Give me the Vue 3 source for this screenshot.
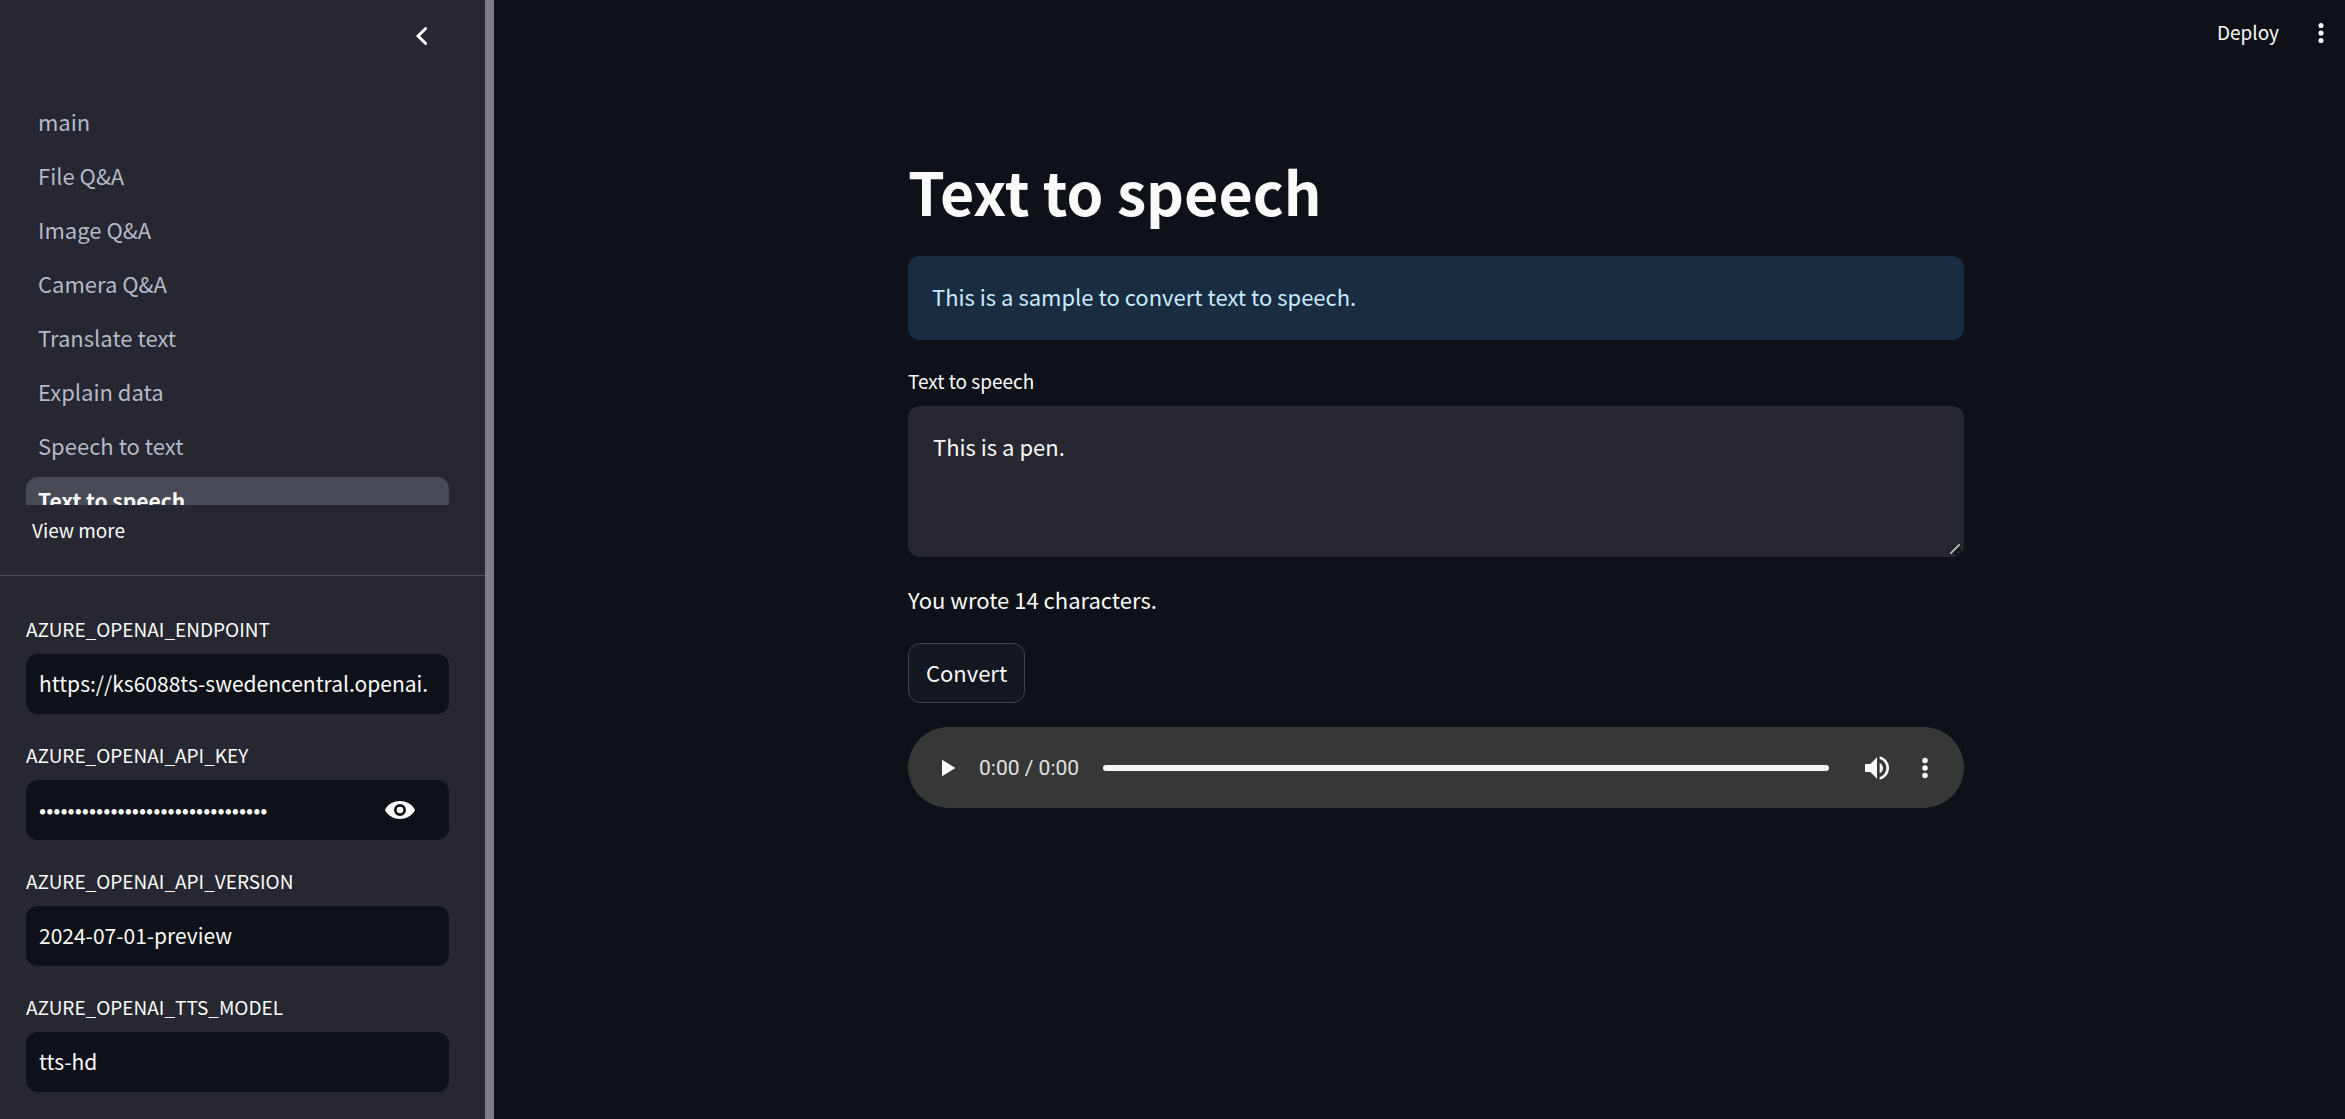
<script setup>
import { ref, computed } from 'vue'

const pages = ['main', 'File Q&A', 'Image Q&A', 'Camera Q&A', 'Translate text', 'Explain data', 'Speech to text', 'Text to speech']
const current = 'Text to speech'

const fields = ref([
  { id: 'endpoint', label: 'AZURE_OPENAI_ENDPOINT', value: 'https://ks6088ts-swedencentral.openai.', secret: false },
  { id: 'key', label: 'AZURE_OPENAI_API_KEY', value: '0123456789abcdef0123456789abcdef', secret: true },
  { id: 'version', label: 'AZURE_OPENAI_API_VERSION', value: '2024-07-01-preview', secret: false },
  { id: 'model', label: 'AZURE_OPENAI_TTS_MODEL', value: 'tts-hd', secret: false },
])

const text = ref('This is a pen.')
const count = computed(() => text.value.length)
const position = ref(0)
</script>

<template>
  <div class="app">
    <aside class="sidebar">
      <div class="sidebar-head">
        <button class="icon-btn" aria-label="Collapse sidebar">
          <svg width="36" height="36" viewBox="0 0 24 24" fill="none" stroke="currentColor" stroke-width="2" stroke-linecap="round">
            <path d="M14.4 7l-5 5 5 5" />
          </svg>
        </button>
      </div>
      <nav class="nav">
        <ul class="nav-list">
          <li v-for="page in pages" :key="page">
            <a href="#" class="nav-link" :class="{ active: page === current }">{{ page }}</a>
          </li>
        </ul>
        <button class="more">View more</button>
      </nav>
      <form class="fields" @submit.prevent>
        <div v-for="f in fields" :key="f.id" class="field">
          <label class="label" :for="f.id">{{ f.label }}</label>
          <div class="box">
            <input :id="f.id" v-model="f.value" class="input" :type="f.secret ? 'password' : 'text'" autocomplete="off" />
            <button v-if="f.secret" type="button" class="icon-btn eye" aria-label="Show password">
              <svg width="36" height="36" viewBox="0 0 24 24" fill="currentColor" fill-rule="evenodd">
                <path d="M12 6C8 6 4.200 8 2.300 11.300c-.3.400-.3 1 0 1.400C4.200 16 8 18 12 18s7.800-2 9.700-5.300c.3-.4.3-1 0-1.400C19.800 8 16 6 12 6zm0 10a4 4 0 1 1 0-8 4 4 0 0 1 0 8z" />
                <circle cx="12" cy="12" r="2.200" />
              </svg>
            </button>
          </div>
        </div>
      </form>
    </aside>
    <div class="resizer"></div>

    <div class="page">
      <header class="toolbar">
        <button class="deploy">Deploy</button>
        <button class="icon-btn" aria-label="Main menu">
          <svg width="36" height="36" viewBox="0 0 24 24" fill="currentColor">
            <circle cx="12" cy="7" r="1.700" /><circle cx="12" cy="12" r="1.700" /><circle cx="12" cy="17" r="1.700" />
          </svg>
        </button>
      </header>
      <main class="content">
        <h1 class="title">Text to speech</h1>
        <p class="info">This is a sample to convert text to speech.</p>
        <div class="compose">
          <label class="label" for="speech">Text to speech</label>
          <div class="area-wrap">
            <textarea id="speech" v-model="text" class="area"></textarea>
            <svg class="grip" width="12" height="12" viewBox="0 0 12 12" fill="none" stroke-linecap="square">
              <path d="M2 10l8-8M8 10l2-2" stroke="#101114" stroke-width="4" />
              <path d="M2 10l8-8" stroke="#b9b9bb" stroke-width="2" />
              <path d="M9 9.500l.5-.5" stroke="#8d8d90" stroke-width="1" />
            </svg>
          </div>
        </div>
        <p class="count">You wrote {{ count }} characters.</p>
        <button class="convert">Convert</button>
        <div class="player">
          <button class="icon-btn" aria-label="Play">
            <svg width="36" height="36" viewBox="0 0 24 24" fill="currentColor"><path d="M8 6.500v11l9-5.500z" /></svg>
          </button>
          <span class="time">0:00 / 0:00</span>
          <input v-model="position" class="seek" type="range" min="0" max="100" aria-label="Seek" />
          <button class="icon-btn" aria-label="Mute">
            <svg width="32" height="32" viewBox="0 0 24 24" fill="currentColor">
              <path d="M3 9v6h4l5 5V4L7 9H3zm13.500 3c0-1.770-1.020-3.290-2.500-4.030v8.050c1.480-.73 2.500-2.250 2.500-4.020zM14 3.230v2.060c2.890.86 5 3.540 5 6.710s-2.110 5.850-5 6.710v2.060c4.010-.91 7-4.490 7-8.770s-2.990-7.860-7-8.770z" />
            </svg>
          </button>
          <button class="icon-btn" aria-label="More options">
            <svg width="36" height="36" viewBox="0 0 24 24" fill="currentColor">
              <circle cx="12" cy="7" r="1.850" /><circle cx="12" cy="12" r="1.850" /><circle cx="12" cy="17" r="1.850" />
            </svg>
          </button>
        </div>
      </main>
    </div>
  </div>
</template>

<style>
body {
  margin: 0;
  background: #0e1117;
}
</style>

<style scoped>
.app {
  display: flex;
  height: 100vh;
  overflow: hidden;
  background: #0e1117;
  color: #fafafa;
  font-family: "Noto Sans CJK JP", "Noto Sans", sans-serif;
  font-size: 22px;
  line-height: 36px;
}
.app * {
  box-sizing: border-box;
}
button, input, textarea {
  font: inherit;
  color: inherit;
  border: 0;
  background: none;
  padding: 0;
  margin: 0;
  outline: 0;
}
h1, p, ul {
  margin: 0;
  padding: 0;
}
button {
  cursor: pointer;
}
.icon-btn {
  display: flex;
  flex: none;
}

.sidebar {
  flex: none;
  width: 485px;
  height: 100%;
  overflow: hidden;
  background: #262730;
}
.resizer {
  flex: none;
  width: 9px;
  background: #7d7c83;
}
.sidebar-head {
  display: flex;
  justify-content: flex-end;
  padding: 18px 45px 42px 0;
}
.nav {
  border-bottom: 1px solid #4c4d56;
  padding-bottom: 28px;
}
.nav-list {
  list-style: none;
  height: 409px;
  overflow: hidden;
  padding: 0 36px 0 26px;
}
.nav-link {
  display: block;
  height: 48px;
  margin: 3px 0 6px;
  padding: 0 12px;
  border-radius: 12px;
  line-height: 45px;
  color: #b4b9c8;
  text-decoration: none;
}
.nav-link.active {
  background: #484a55;
  color: #fafafa;
  font-size: 21px;
  font-weight: 700;
  line-height: 46px;
}
.more {
  display: block;
  margin-left: 32px;
  margin-top: 8px;
  font-size: 19px;
  line-height: 34px;
}
.fields {
  display: flex;
  flex-direction: column;
  gap: 24px;
  padding: 36px 36px 0 26px;
}
.field {
  display: flex;
  flex-direction: column;
}
.label {
  font-size: 19px;
  line-height: 34px;
  margin-bottom: 8px;
}
.box {
  display: flex;
  align-items: center;
  height: 60px;
  border-radius: 12px;
  background: #0e1117;
  padding: 0 12px 0 13px;
}
.input {
  flex: 1;
  min-width: 0;
  height: 100%;
  padding-bottom: 3px;
  font-size: 21px;
}
.eye {
  margin-right: 19px;
}

.page {
  flex: 1;
  min-width: 0;
}
.toolbar {
  display: flex;
  align-items: center;
  justify-content: flex-end;
  gap: 24px;
  height: 66px;
  padding-right: 6px;
}
.deploy {
  padding-bottom: 2px;
  font-size: 19px;
}
.content {
  display: flex;
  flex-direction: column;
  align-items: stretch;
  max-width: 1089px;
  margin: 0 auto;
  padding-left: 33px;
}
.title {
  margin-top: 86px;
  font-size: 59px;
  font-weight: 700;
  line-height: 78px;
}
.info {
  margin-top: 26px;
  padding: 22px 24px 26px;
  border-radius: 12px;
  background: #192c41;
  color: #c7ebff;
}
.compose {
  display: flex;
  flex-direction: column;
  margin-top: 24px;
}
.area-wrap {
  position: relative;
  display: flex;
}
.area {
  flex: 1;
  height: 151px;
  padding: 22px 25px;
  border-radius: 12px;
  background: #262730;
  resize: vertical;
}
.area::-webkit-resizer {
  background: transparent;
}
.grip {
  position: absolute;
  right: 3px;
  bottom: 2px;
  pointer-events: none;
}
.count {
  margin-top: 24px;
}
.convert {
  align-self: flex-start;
  height: 60px;
  margin-top: 26px;
  padding: 0 17px 2px;
  border: 1px solid #41444c;
  border-radius: 12px;
  background: #131720;
}
.player {
  display: flex;
  align-items: center;
  height: 81px;
  margin-top: 24px;
  padding: 0 21px 0 22px;
  border-radius: 41px;
  background: #363837;
}
.time {
  margin: 0 24px 0 13px;
  font-family: Roboto, sans-serif;
  font-size: 21px;
  color: #e1e1e1;
}
.seek {
  flex: 1;
  min-width: 0;
  height: 6px;
  margin-right: 32px;
  appearance: none;
  border-radius: 3px;
  background: #f5f5f5;
}
.seek::-webkit-slider-thumb {
  appearance: none;
  width: 1px;
  height: 6px;
}
.player .icon-btn + .icon-btn {
  margin-left: 14px;
}
</style>
